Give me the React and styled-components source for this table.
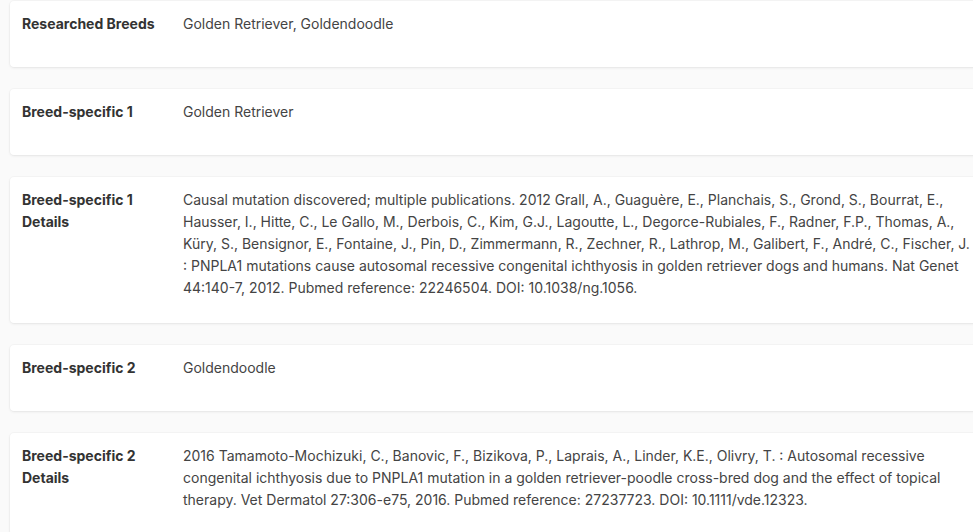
import React from "react";
import styled, { createGlobalStyle } from "styled-components";

const Global = createGlobalStyle`
  html, body { margin: 0; padding: 0; background: #fafafa; overflow: hidden; }
  body { font-family: Inter, "Noto Sans", sans-serif; }
`;

const List = styled.div`
  display: flex;
  flex-direction: column;
  gap: 22px;
  padding: 1px 0 0 10px;
  width: 974px;
`;

const Card = styled.div`
  box-sizing: border-box;
  min-height: 66px;
  background: #fff;
  border-radius: 4px;
  box-shadow: 0 1px 3px rgba(0, 0, 0, 0.07), 0 0 0 1px rgba(0, 0, 0, 0.02);
  padding: 12px 12px 24px 12px;
  display: grid;
  grid-template-columns: 161px 1fr;
  font-size: 14px;
  line-height: 22px;
`;

const Label = styled.div`
  font-weight: 700;
  color: #333;
  padding-right: 16px;
`;

const Value = styled.div`
  color: #444;
`;

const rows = [
  ["Researched Breeds", "Golden Retriever, Goldendoodle"],
  ["Breed-specific 1", "Golden Retriever"],
  [
    "Breed-specific 1 Details",
    "Causal mutation discovered; multiple publications. 2012 Grall, A., Guaguère, E., Planchais, S., Grond, S., Bourrat, E., Hausser, I., Hitte, C., Le Gallo, M., Derbois, C., Kim, G.J., Lagoutte, L., Degorce-Rubiales, F., Radner, F.P., Thomas, A., Küry, S., Bensignor, E., Fontaine, J., Pin, D., Zimmermann, R., Zechner, R., Lathrop, M., Galibert, F., André, C., Fischer, J. : PNPLA1 mutations cause autosomal recessive congenital ichthyosis in golden retriever dogs and humans. Nat Genet 44:140-7, 2012. Pubmed reference: 22246504. DOI: 10.1038/ng.1056.",
  ],
  ["Breed-specific 2", "Goldendoodle"],
  [
    "Breed-specific 2 Details",
    "2016 Tamamoto-Mochizuki, C., Banovic, F., Bizikova, P., Laprais, A., Linder, K.E., Olivry, T. : Autosomal recessive congenital ichthyosis due to PNPLA1 mutation in a golden retriever-poodle cross-bred dog and the effect of topical therapy. Vet Dermatol 27:306-e75, 2016. Pubmed reference: 27237723. DOI: 10.1111/vde.12323.",
  ],
];

export default function App() {
  return (
    <>
      <Global />
      <List>
        {rows.map(([l, v]) => (
          <Card key={l}>
            <Label>{l}</Label>
            <Value>{v}</Value>
          </Card>
        ))}
      </List>
    </>
  );
}
